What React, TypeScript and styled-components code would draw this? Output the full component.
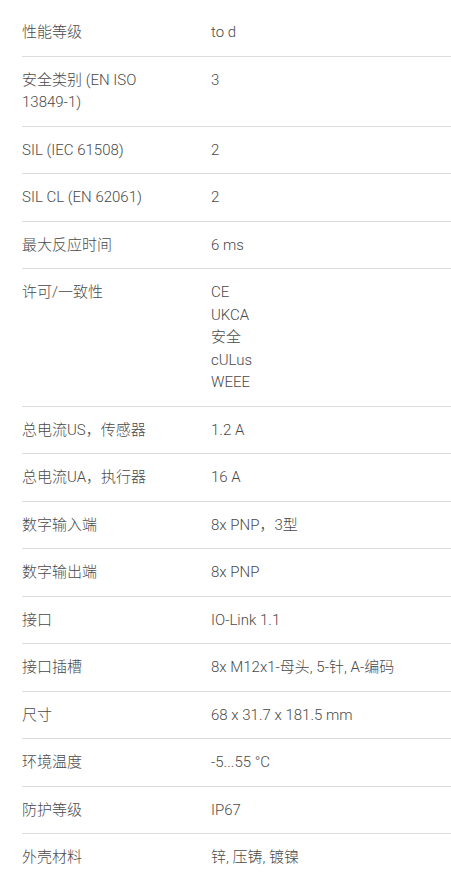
import styled, { createGlobalStyle } from 'styled-components'

const GlobalStyle = createGlobalStyle`
  body {
    margin: 0;
    background: #ffffff;
    font-family: Roboto, "Noto Sans CJK SC", "Liberation Sans", sans-serif;
  }
`

const Table = styled.div`
  padding: 9px 0 0 22px;
  display: flex;
  flex-direction: column;
`

const Row = styled.div<{ $last?: boolean }>`
  display: grid;
  grid-template-columns: 189px 1fr;
  padding: 12px 0;
  border-bottom: ${props => (props.$last ? 'none' : '1px solid #dcdcdc')};
`

const Label = styled.div`
  font-size: 15px;
  font-weight: 300;
  line-height: 22.5px;
  color: #4a4a4a;
  padding-right: 40px;
`

const Value = styled.div`
  font-size: 15px;
  font-weight: 300;
  line-height: 22.5px;
  color: #4a4a4a;
  display: flex;
  flex-direction: column;
`

const specs: [string, string[]][] = [
  ['性能等级', ['to d']],
  ['安全类别 (EN ISO 13849-1)', ['3']],
  ['SIL (IEC 61508)', ['2']],
  ['SIL CL (EN 62061)', ['2']],
  ['最大反应时间', ['6 ms']],
  ['许可/一致性', ['CE', 'UKCA', '安全', 'cULus', 'WEEE']],
  ['总电流US，传感器', ['1.2 A']],
  ['总电流UA，执行器', ['16 A']],
  ['数字输入端', ['8x PNP，3型']],
  ['数字输出端', ['8x PNP']],
  ['接口', ['IO-Link 1.1']],
  ['接口插槽', ['8x M12x1-母头, 5-针, A-编码']],
  ['尺寸', ['68 x 31.7 x 181.5 mm']],
  ['环境温度', ['-5...55 °C']],
  ['防护等级', ['IP67']],
  ['外壳材料', ['锌, 压铸, 镀镍']],
]

export default function App() {
  return (
    <>
      <GlobalStyle />
      <Table>
        {specs.map(([label, values], i) => (
          <Row key={label} $last={i === specs.length - 1}>
            <Label>{label}</Label>
            <Value>
              {values.map(v => (
                <span key={v}>{v}</span>
              ))}
            </Value>
          </Row>
        ))}
      </Table>
    </>
  )
}
